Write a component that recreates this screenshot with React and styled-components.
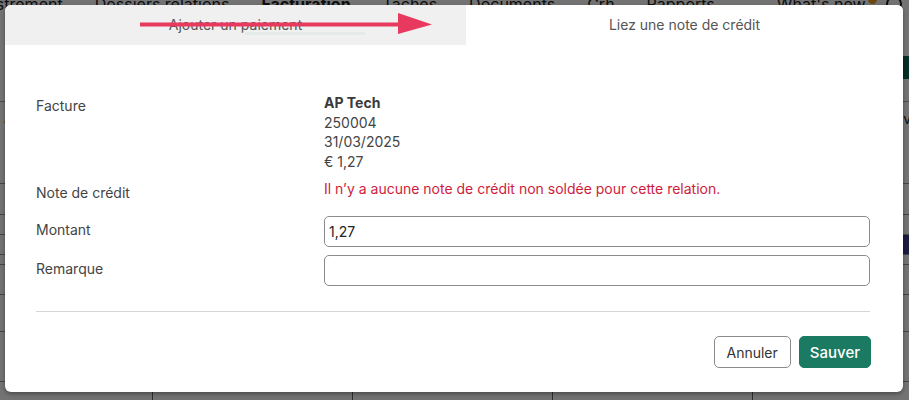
import React from "react";
import styled, { createGlobalStyle } from "styled-components";

const Global = createGlobalStyle`
  html, body { margin: 0; padding: 0; background: #fff; }
  * { box-sizing: border-box; }
  body { font-family: Inter, "Noto Sans", "Liberation Sans", sans-serif; }
`;

const Page = styled.div`
  position: relative;
  width: 909px;
  height: 400px;
  overflow: hidden;
  background: #ffffff;
`;

/* ---------- background application (behind the dialog) ---------- */
const Nav = styled.div`
  display: flex;
  align-items: center;
  height: 22px;
  margin-top: -7px;
  margin-left: -52px;
  gap: 32px;
  font-size: 16px;
  color: #222;
  white-space: nowrap;
`;
const NavItem = styled.span`
  font-weight: ${(p) => (p.$active ? 700 : 400)};
  position: relative;
  margin-left: ${(p) => p.$ml || 0}px;
`;
const Badge = styled.span`
  position: absolute;
  right: -11px;
  top: 1px;
  width: 9px;
  height: 9px;
  border-radius: 50%;
  background: #f0a020;
`;
const HelpIcon = styled.span`
  width: 16px;
  height: 16px;
  border: 2px solid #222;
  border-radius: 50%;
  margin-left: -12px;
  flex: none;
`;
const Toolbar = styled.div`
  height: 87px;
  display: flex;
  justify-content: flex-end;
  align-items: flex-start;
  border-bottom: 1px solid #aaa;
  padding-top: 41px;
`;
const GreenBtn = styled.div`
  width: 60px;
  height: 23px;
  background: #0e6a52;
  margin-right: -40px;
`;
const Row = styled.div`
  height: ${(p) => p.$h}px;
  border-bottom: 1px solid #999;
  display: grid;
  grid-template-columns: 153px 200px 200px 200px 1fr;
  font-size: 14px;
  color: #222;
`;
const Cell = styled.div`
  border-right: ${(p) => (p.$lines ? "1px solid #666" : "none")};
  background: ${(p) => p.$bg || "transparent"};
  padding: 8px 4px;
`;

const Overlay = styled.div`
  position: absolute;
  inset: 0;
  background: rgba(0, 0, 0, 0.55);
  display: flex;
  padding: 5px 6px 8px 5px;
`;

/* ---------- dialog ---------- */
const Modal = styled.div`
  position: relative;
  flex: 1;
  background: #fff;
  border-radius: 6px;
  box-shadow: 0 2px 4px rgba(0, 0, 0, 0.35);
  display: flex;
  flex-direction: column;
  overflow: hidden;
  color: #444;
  font-size: 14px;
`;
const Tabs = styled.div`
  display: grid;
  grid-template-columns: 461px 1fr;
  height: 40px;
`;
const Tab = styled.div`
  position: relative;
  display: flex;
  align-items: center;
  justify-content: center;
  background: ${(p) => (p.$active ? "#ffffff" : "#f0f0f0")};
  color: #555;
  font-size: 14px;
  padding-bottom: 1px;
`;
const TabBar = styled.span`
  position: absolute;
  left: 240px;
  top: 27px;
  width: 120px;
  height: 3px;
  background: #e5ebe8;
`;
const Arrow = styled.svg`
  position: absolute;
  left: 135px;
  top: 8px;
`;
const Body = styled.div`
  flex: 1;
  display: flex;
  flex-direction: column;
  padding: 48px 33px 24px 31px;
`;
const Form = styled.div`
  display: grid;
  grid-template-columns: 288px 1fr;
  row-gap: 8px;
  line-height: 19.5px;
`;
const Label = styled.div`
  padding-top: ${(p) => p.$pt ?? 3.5}px;
  color: #444;
`;
const Values = styled.div`
  display: flex;
  flex-direction: column;
  color: #444;
`;
const Strong = styled.span`
  font-weight: 700;
  color: #3a3a3a;
`;
const ErrorText = styled.div`
  color: #cf1b3b;
  padding-bottom: 10px;
  margin-top: -0.5px;
`;
const Input = styled.input`
  width: 100%;
  height: 31px;
  border: 1px solid #8b8b8b;
  border-radius: 5px;
  padding: 0 4px;
  font: inherit;
  font-size: 14px;
  color: #222;
  background: #fff;
  outline: none;
`;
const Divider = styled.hr`
  border: none;
  border-top: 1px solid #d6d6d6;
  margin: 25px 0 24px;
`;
const Footer = styled.div`
  display: flex;
  justify-content: flex-end;
  gap: 8px;
  margin-right: -1px;
`;
const Button = styled.button`
  height: 32px;
  padding: 0 ${(p) => (p.$primary ? 10 : 12)}px;
  border-radius: 5px;
  font-family: inherit;
  font-size: ${(p) => (p.$primary ? 15 : 14)}px;
  font-weight: ${(p) => (p.$primary ? 500 : 400)};
  border: 1px solid ${(p) => (p.$primary ? "#1b7a62" : "#8b8b8b")};
  background: ${(p) => (p.$primary ? "#1b7a62" : "#fff")};
  color: ${(p) => (p.$primary ? "#fff" : "#333")};
`;

export default function App() {
  return (
    <Page>
      <Global />
      <Nav>
        <NavItem>Enregistrement</NavItem>
        <NavItem>Dossiers relations</NavItem>
        <NavItem $active>Facturation</NavItem>
        <NavItem>Tâches</NavItem>
        <NavItem>Documents</NavItem>
        <NavItem>Crh</NavItem>
        <NavItem>Rapports</NavItem>
        <NavItem $ml={30}>
          What's new<Badge />
        </NavItem>
        <HelpIcon />
      </Nav>
      <Toolbar>
        <GreenBtn />
      </Toolbar>
      <Row $h={82}>
        <Cell>a</Cell>
        <Cell />
        <Cell />
        <Cell />
        <Cell style={{ textAlign: "right", paddingRight: 0, marginRight: -10 }}>ve</Cell>
      </Row>
      <Row $h={31} />
      <Row $h={20} />
      <Row $h={20}>
        <Cell />
        <Cell />
        <Cell />
        <Cell />
        <Cell $bg="#3e3d8f" />
      </Row>
      <Row $h={10} />
      <Row $h={30} />
      <Row $h={37} />
      <Row $h={50} />
      <Row $h={40}>
        <Cell $lines />
        <Cell $lines />
        <Cell $lines />
        <Cell $lines />
        <Cell />
      </Row>

      <Overlay>
        <Modal>
          <Tabs>
            <Tab>
              Ajouter un paiement
              <TabBar />
            </Tab>
            <Tab $active>Liez une note de crédit</Tab>
          </Tabs>
          <Arrow width="295" height="24" viewBox="0 0 295 24">
            <rect x="0" y="9.5" width="266" height="4" fill="#e8395f" />
            <polygon points="258,0 292,11.5 258,21" fill="#e8395f" />
          </Arrow>
          <Body>
            <Form>
              <Label $pt={3}>Facture</Label>
              <Values>
                <Strong>AP Tech</Strong>
                <span>250004</span>
                <span>31/03/2025</span>
                <span>€ 1,27</span>
              </Values>
              <Label $pt={4}>Note de crédit</Label>
              <ErrorText>Il n’y a aucune note de crédit non soldée pour cette relation.</ErrorText>
              <Label $pt={4}>Montant</Label>
              <Input defaultValue="1,27" />
              <Label $pt={4}>Remarque</Label>
              <Input defaultValue="" />
            </Form>
            <Divider />
            <Footer>
              <Button>Annuler</Button>
              <Button $primary>Sauver</Button>
            </Footer>
          </Body>
        </Modal>
      </Overlay>
    </Page>
  );
}
